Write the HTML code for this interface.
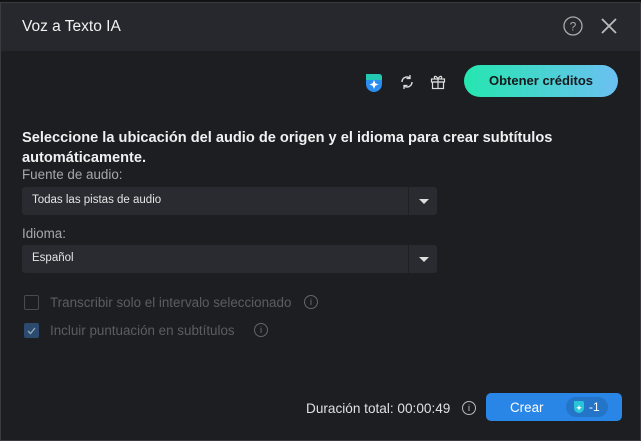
<!DOCTYPE html>
<html><head><meta charset="utf-8"><style>
*{margin:0;padding:0;box-sizing:border-box}
body{width:641px;height:441px;background:#111214;font-family:"Liberation Sans",sans-serif;position:relative;overflow:hidden}
.win{position:absolute;left:0;top:2px;width:641px;height:439px;background:#1d1e22;border:1px solid #3a3b40}
.tb{position:absolute;left:0;top:0;width:639px;height:48px;background:#27282d}
.t{position:absolute;font-size:13.4px;color:#e8e8ea;white-space:nowrap}
.dd{position:absolute;left:21px;width:415px;height:28px;background:#2a2b30;border-radius:3px}
.dd span{position:absolute;left:10px;top:7px;font-size:11.5px;color:#e4e4e6}
.dd i{position:absolute;left:386px;top:0;width:1px;height:28px;background:#1f2024}
.dd b{position:absolute;left:397px;top:12px;border-left:5px solid transparent;border-right:5px solid transparent;border-top:5px solid #ddd}
.info{position:absolute;width:14px;height:14px;border:1px solid #666;border-radius:50%;font-size:9px;color:#777;text-align:center;line-height:12px;font-style:normal}
</style></head><body>
<div class="win">
<div class="tb"></div>
<div class="t" style="left:21px;top:15px;font-size:15.5px;color:#f2f2f2">Voz a Texto IA</div>
<svg style="position:absolute;left:561px;top:12px" width="22" height="22"><circle cx="11" cy="11" r="9" fill="none" stroke="#aaa" stroke-width="1.3"/><text x="11" y="15.5" font-size="12" fill="#aaa" text-anchor="middle" font-family="Liberation Sans">?</text></svg>
<svg style="position:absolute;left:598px;top:13px" width="20" height="20"><path d="M3 3L17 17M17 3L3 17" stroke="#bbb" stroke-width="1.8"/></svg>
<svg style="position:absolute;left:363px;top:69px" width="20" height="22"><path d="M2 2h13a3 3 0 0 1 3 3v7a8 8 0 0 1-16 0z" fill="#2a8ef0"/><path d="M2 2h13a3 3 0 0 1 3 3v3H2z" fill="#23c8b0"/><path d="M10 8l1.3 3.2L14.5 12.5 11.3 13.8 10 17 8.7 13.8 5.5 12.5 8.7 11.2z" fill="#fff"/></svg>
<svg style="position:absolute;left:397px;top:70px" width="18" height="18"><path d="M4 9a5 5 0 0 1 8-4M14 9a5 5 0 0 1-8 4" fill="none" stroke="#ddd" stroke-width="1.4"/><path d="M12 2v3.5H8.5M6 16v-3.5h3.5" fill="none" stroke="#ddd" stroke-width="1.3"/></svg>
<svg style="position:absolute;left:428px;top:70px" width="18" height="18"><rect x="2.5" y="6" width="13" height="3" fill="none" stroke="#ddd" stroke-width="1.2"/><rect x="3.5" y="9" width="11" height="6.5" fill="none" stroke="#ddd" stroke-width="1.2"/><path d="M9 6v9.5M9 6C7 2 4 3 6 6M9 6c2-4 5-3 3 0" fill="none" stroke="#ddd" stroke-width="1.2"/></svg>
<div style="position:absolute;left:463px;top:62px;width:154px;height:32px;border-radius:16px;background:linear-gradient(90deg,#25e6b0,#6cc0f2);color:#16181c;font-weight:bold;font-size:13px;text-align:center;line-height:32px">Obtener créditos</div>
<div class="t" style="left:21px;top:125px;font-weight:bold;font-size:14.6px;color:#f0f0f0;line-height:20px">Seleccione la ubicación del audio de origen y el idioma para crear subtítulos<br>automáticamente.</div>
<div class="t" style="left:21px;top:164px;color:#a8a8ac">Fuente de audio:</div>
<div class="dd" style="top:184px"><span>Todas las pistas de audio</span><i></i><b></b></div>
<div class="t" style="left:21px;top:223px;color:#a8a8ac">Idioma:</div>
<div class="dd" style="top:242px"><span>Español</span><i></i><b></b></div>
<div style="position:absolute;left:23px;top:292px;width:15px;height:15px;border:1px solid #4a4b50;border-radius:2px"></div>
<div class="t" style="left:49px;top:292px;color:#5c5d62">Transcribir solo el intervalo seleccionado</div>
<i class="info" style="left:303px;top:292px">i</i>
<div style="position:absolute;left:23px;top:320px;width:15px;height:15px;background:#2b4a6e;border-radius:2px"><svg width="15" height="15"><path d="M4 8l2.5 2.5L11 5" fill="none" stroke="#9ab" stroke-width="1.3"/></svg></div>
<div class="t" style="left:49px;top:320px;color:#5c5d62">Incluir puntuación en subtítulos</div>
<i class="info" style="left:253px;top:320px">i</i>
<div class="t" style="left:305px;top:398px;color:#e0e0e2;font-size:13.6px">Duración total: 00:00:49</div>
<i class="info" style="left:461px;top:398px;border-color:#bbb;color:#ccc">i</i>
<div style="position:absolute;left:485px;top:390px;width:136px;height:28px;border-radius:5px;background:#2a86e6">
<div class="t" style="left:24px;top:7px;color:#fff">Crear</div>
<div style="position:absolute;left:80px;top:4px;width:42px;height:20px;border-radius:10px;background:#2474c8"></div>
<svg style="position:absolute;left:87px;top:7px" width="12" height="14"><path d="M1 1h8a2 2 0 0 1 2 2v5a5 5 0 0 1-10 0z" fill="#29c4d8"/><path d="M6 5l.8 2 2 .8-2 .8L6 10.6 5.2 8.6l-2-.8 2-.8z" fill="#fff"/></svg>
<div class="t" style="left:103px;top:7px;color:#fff;font-size:12px">-1</div>
</div>
</div>
</body></html>
